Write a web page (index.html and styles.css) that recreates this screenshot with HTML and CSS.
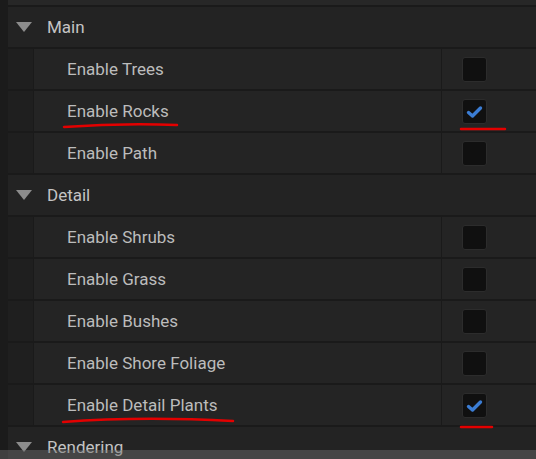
FILE: index.html
```html
<!DOCTYPE html>
<html>
<head>
<meta charset="utf-8">
<link rel="stylesheet" href="styles.css">
</head>
<body>
<div class="panel">
  <div class="topbar"></div>
  <div class="content">
    <div class="cat-head"><span class="tri"></span><span class="cat-name">Main</span></div>
    <div class="prop"><div class="indent"></div><div class="name">Enable Trees</div><div class="val"><span class="cb"></span></div></div>
    <div class="prop"><div class="indent"></div><div class="name">Enable Rocks</div><div class="val"><span class="cb on"><svg viewBox="0 0 25 25" width="25" height="25"><path d="M6.5 13.5 L10.5 17 L18.5 9" fill="none" stroke="#3b7dd4" stroke-width="3.4" stroke-linecap="round" stroke-linejoin="round"/></svg></span></div></div>
    <div class="prop"><div class="indent"></div><div class="name">Enable Path</div><div class="val"><span class="cb"></span></div></div>
    <div class="cat-head"><span class="tri"></span><span class="cat-name">Detail</span></div>
    <div class="prop"><div class="indent"></div><div class="name">Enable Shrubs</div><div class="val"><span class="cb"></span></div></div>
    <div class="prop"><div class="indent"></div><div class="name">Enable Grass</div><div class="val"><span class="cb"></span></div></div>
    <div class="prop"><div class="indent"></div><div class="name">Enable Bushes</div><div class="val"><span class="cb"></span></div></div>
    <div class="prop"><div class="indent"></div><div class="name">Enable Shore Foliage</div><div class="val"><span class="cb"></span></div></div>
    <div class="prop"><div class="indent"></div><div class="name">Enable Detail Plants</div><div class="val"><span class="cb on"><svg viewBox="0 0 25 25" width="25" height="25"><path d="M6.5 13.5 L10.5 17 L18.5 9" fill="none" stroke="#3b7dd4" stroke-width="3.4" stroke-linecap="round" stroke-linejoin="round"/></svg></span></div></div>
    <div class="cat-head"><span class="tri"></span><span class="cat-name">Rendering</span></div>
  </div>
  <div class="bottom-band"></div>
  <svg class="marks" viewBox="0 0 536 459" width="536" height="459">
    <path d="M64 127 Q120 123 177 125" fill="none" stroke="#e30000" stroke-width="2.5" stroke-linecap="round"/>
    <path d="M461 129 L505 129" fill="none" stroke="#e30000" stroke-width="2.5" stroke-linecap="round"/>
    <path d="M63 422 Q140 416 233 421" fill="none" stroke="#e30000" stroke-width="2.5" stroke-linecap="round"/>
    <path d="M461 427 L492 427" fill="none" stroke="#e30000" stroke-width="2.5" stroke-linecap="round"/>
  </svg>
</div>
</body>
</html>
```
FILE: styles.css
```css
html, body {
  margin: 0;
  padding: 0;
  background: #1b1b1b;
}
.panel {
  position: relative;
  width: 536px;
  height: 459px;
  overflow: hidden;
  background: #1b1b1b;
  font-family: Roboto, "Liberation Sans", sans-serif;
}
.topbar {
  height: 5px;
  margin-left: 8px;
  background: #272727;
  border-bottom: 2px solid #1a1a1a;
}
.content {
  margin-left: 8px;
  display: flex;
  flex-direction: column;
}
.cat-head {
  height: 40px;
  border-bottom: 2px solid #1a1a1a;
  background: #232323;
  display: flex;
  align-items: center;
}
.tri {
  width: 0;
  height: 0;
  margin-left: 8px;
  border-left: 8px solid transparent;
  border-right: 8px solid transparent;
  border-top: 10px solid #8c8c8c;
}
.cat-name {
  margin-left: 15px;
  color: #c4c4c4;
  font-size: 17px;
}
.prop {
  height: 40px;
  border-bottom: 2px solid #1a1a1a;
  display: flex;
}
.indent {
  width: 25px;
  background: #1f1f1f;
  border-right: 1px solid #1a1a1a;
}
.name {
  flex: 1;
  background: #242424;
  color: #bcbcbc;
  font-size: 17px;
  display: flex;
  align-items: center;
  padding-left: 33px;
}
.val {
  width: 95px;
  background: #242424;
  border-left: 1px solid #1a1a1a;
  display: flex;
  align-items: center;
  padding-left: 20px;
  box-sizing: border-box;
}
.cb {
  width: 25px;
  height: 25px;
  box-sizing: border-box;
  background: #101010;
  border: 1px solid #2c2c2c;
  border-radius: 3px;
  display: flex;
  align-items: center;
  justify-content: center;
}
.cb svg {
  display: block;
  margin: -1px;
}
.bottom-band {
  position: absolute;
  left: 0;
  right: 0;
  top: 450px;
  bottom: 0;
  background: rgba(110, 110, 110, 0.45);
}
.marks {
  position: absolute;
  left: 0;
  top: 0;
  pointer-events: none;
}
```
